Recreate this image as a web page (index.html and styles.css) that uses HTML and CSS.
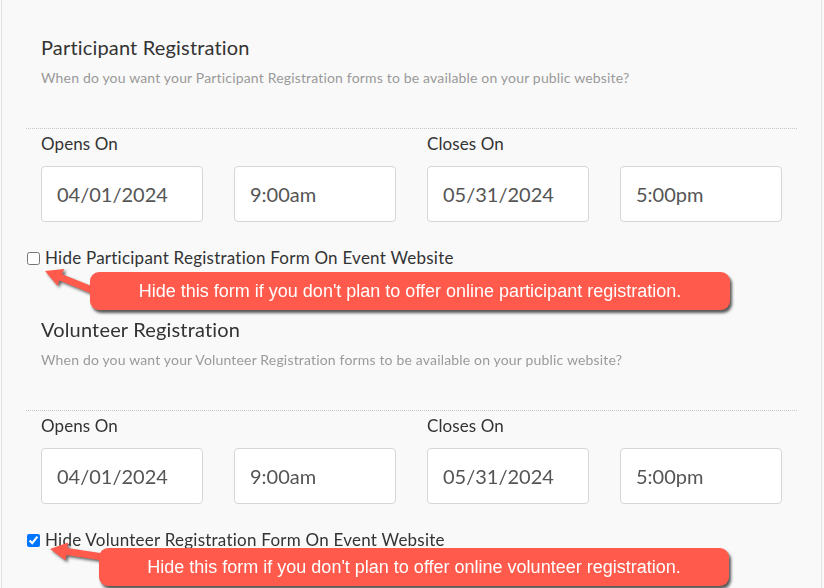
FILE: index.html
```html
<!DOCTYPE html>
<html lang="en">
<head>
<meta charset="utf-8">
<title>Registration Settings</title>
<link rel="stylesheet" href="styles.css">
</head>
<body>
<div class="page">
  <section class="reg">
    <div class="intro">
      <h2 class="title">Participant Registration</h2>
      <p class="sub">When do you want your Participant Registration forms to be available on your public website?</p>
    </div>
    <div class="rule"></div>
    <div class="fields">
      <div class="lbl span2">Opens On</div>
      <div class="lbl span2">Closes On</div>
      <input class="box" type="text" value="04/01/2024" readonly>
      <input class="box" type="text" value="9:00am" readonly>
      <input class="box" type="text" value="05/31/2024" readonly>
      <input class="box" type="text" value="5:00pm" readonly>
    </div>
    <label class="check"><input type="checkbox" class="cb"><span>Hide Participant Registration Form On Event Website</span></label>
    <svg class="arrow" viewBox="2 0 822 282" width="822" height="282" aria-hidden="true">
      <polygon points="45,271 64.2,269.1 62.1,274.2 101.9,290.3 99.3,296.7 59.5,280.6 57.4,285.7" />
    </svg>
    <div class="callout c1">Hide this form if you don't plan to offer online participant registration.</div>
  </section>
  <section class="reg">
    <div class="intro">
      <h2 class="title">Volunteer Registration</h2>
      <p class="sub">When do you want your Volunteer Registration forms to be available on your public website?</p>
    </div>
    <div class="rule"></div>
    <div class="fields">
      <div class="lbl span2">Opens On</div>
      <div class="lbl span2">Closes On</div>
      <input class="box" type="text" value="04/01/2024" readonly>
      <input class="box" type="text" value="9:00am" readonly>
      <input class="box" type="text" value="05/31/2024" readonly>
      <input class="box" type="text" value="5:00pm" readonly>
    </div>
    <label class="check"><input type="checkbox" class="cb" checked><span>Hide Volunteer Registration Form On Event Website</span></label>
    <svg class="arrow" viewBox="2 282 822 282" width="822" height="282" aria-hidden="true">
      <polygon points="50,549 68.1,542.6 67.3,548 109.8,554.4 108.8,561.4 66.3,555 65.5,560.4" />
    </svg>
    <div class="callout c2">Hide this form if you don't plan to offer online volunteer registration.</div>
  </section>
</div>
</body>
</html>
```
FILE: styles.css
```css
* { box-sizing: border-box; }
html, body {
  margin: 0;
  padding: 0;
  background: #f9f9f9;
  overflow: hidden;
}
body {
  font-family: Lato, "Noto Sans", sans-serif;
  color: #333;
}
.page {
  margin: 0 2px 0 1px;
  border-left: 1px solid #e4e4e4;
  border-right: 1px solid #e4e4e4;
  height: 588px;
  overflow: hidden;
}
.reg {
  position: relative;
  height: 282px;
  padding: 36px 24px 0 24px;
}
.intro {
  padding-left: 15px;
}
.title {
  margin: 0;
  font-size: 20px;
  line-height: 23px;
  font-weight: 400;
  letter-spacing: 0.17px;
  color: #333;
}
.sub {
  margin: 10px 0 0 0;
  font-size: 14px;
  line-height: 18px;
  letter-spacing: 0.17px;
  color: #9a9a9a;
}
.rule {
  margin-top: 41px;
  border-top: 1px dotted #c8c8c8;
}
.fields {
  display: grid;
  grid-template-columns: repeat(4, 162px);
  column-gap: 31px;
  row-gap: 11px;
  padding: 4px 0 0 15px;
}
.span2 { grid-column: span 2; }
.lbl {
  font-size: 17px;
  line-height: 22px;
  letter-spacing: 0.1px;
  color: #333;
}
.box {
  width: 162px;
  height: 56px;
  margin: 0;
  padding: 0 15px;
  border: 1px solid #d6d6d6;
  border-radius: 4px;
  background: #fff;
  font-family: Lato, "Noto Sans", sans-serif;
  font-size: 20px;
  color: #555;
  outline: none;
}
.check {
  display: flex;
  align-items: center;
  margin-top: 25px;
  font-size: 17px;
  line-height: 22px;
  letter-spacing: 0.24px;
  color: #333;
}
.cb {
  width: 13px;
  height: 13px;
  margin: 0 5px 0 1px;
  flex: none;
}
.arrow {
  position: absolute;
  left: 0;
  top: 0;
  overflow: visible;
  pointer-events: none;
  filter: drop-shadow(2px 2px 1.5px rgba(0, 0, 0, 0.6));
}
.arrow polygon { fill: #ff5a4b; }
.callout {
  position: absolute;
  height: 38px;
  border-radius: 9px;
  background: #ff5a4b;
  color: #fff;
  font-family: "Liberation Sans", Arial, sans-serif;
  font-size: 18px;
  line-height: 38px;
  text-align: center;
  box-shadow: 2px 3px 3px rgba(0, 0, 0, 0.65);
}
.c1 { left: 88px; top: 272px; width: 640px; }
.c2 { left: 97px; top: 266px; width: 630px; }
```
